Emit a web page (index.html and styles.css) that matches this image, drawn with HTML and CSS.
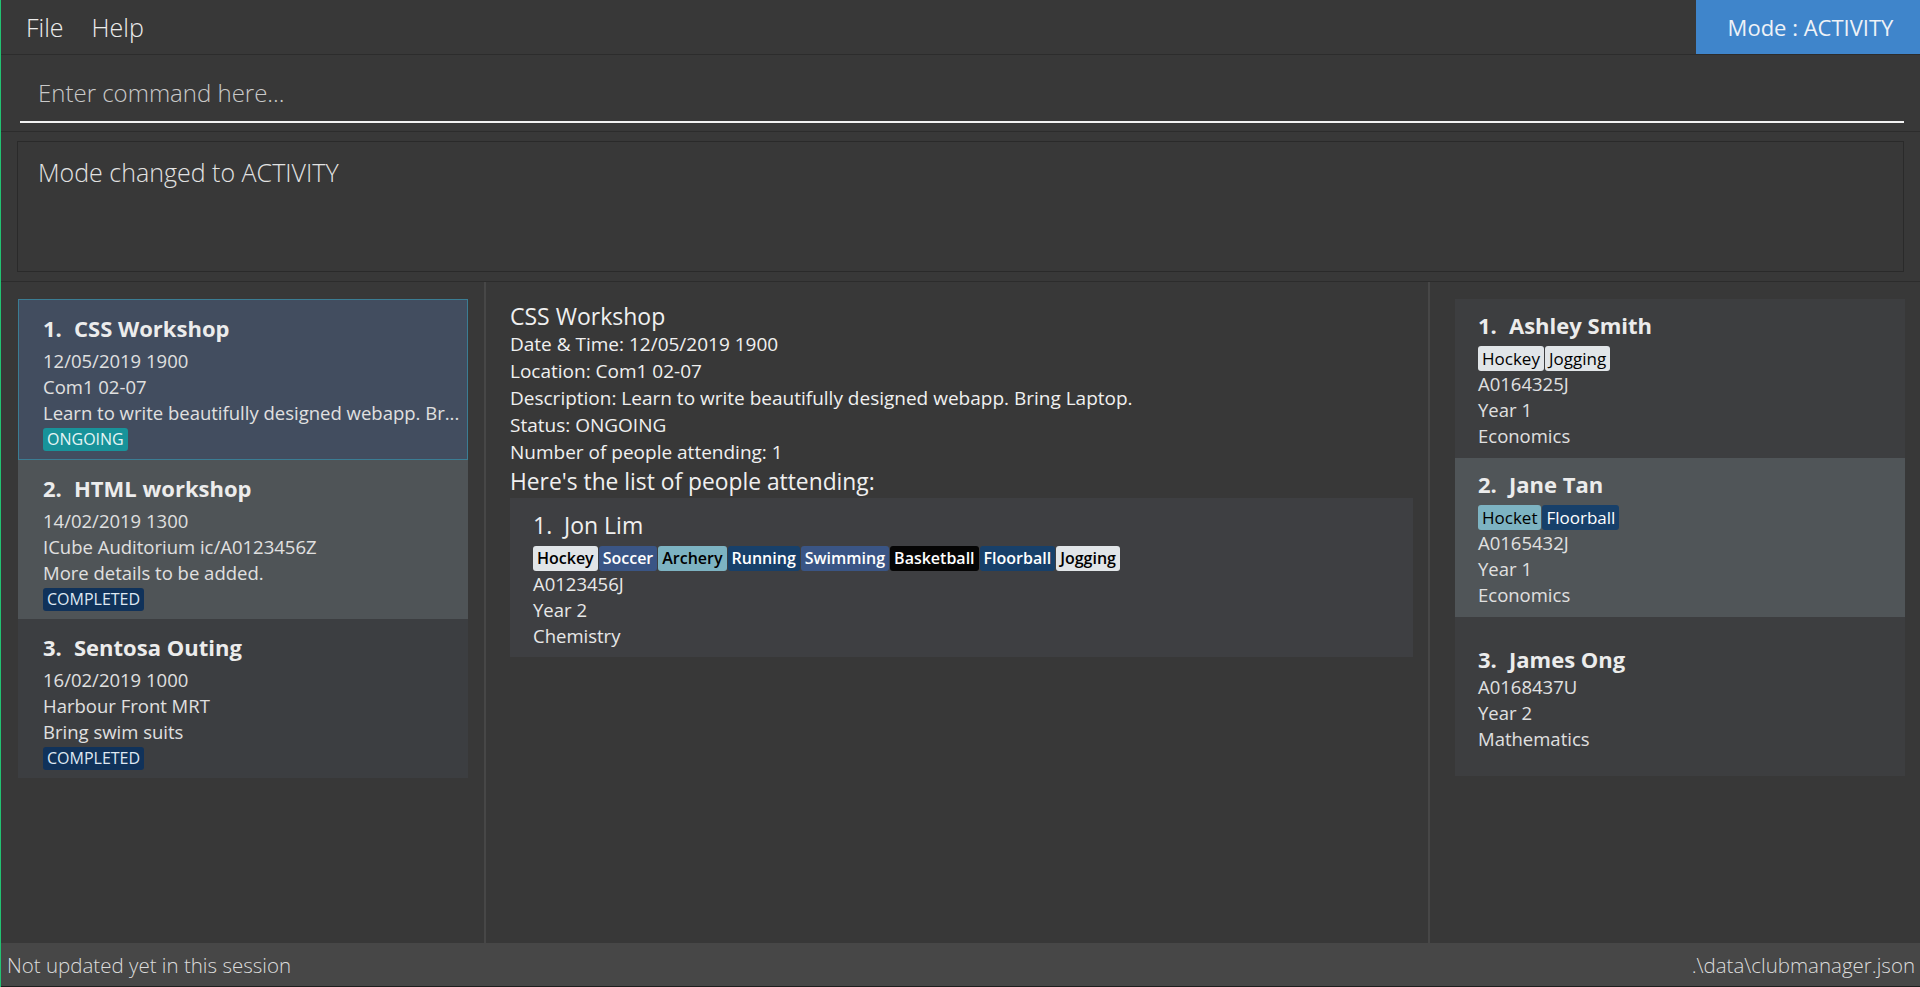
FILE: index.html
```html
<!DOCTYPE html>
<html>
<head>
<meta charset="utf-8">
<title>Club Manager</title>
<link rel="stylesheet" href="styles.css">
</head>
<body>
<div class="app">
  <header class="menubar">
    <nav class="menu">
      <span class="menu-item">File</span>
      <span class="menu-item">Help</span>
    </nav>
    <div class="mode">Mode : ACTIVITY</div>
  </header>

  <section class="command">
    <div class="command-field">Enter command here...</div>
  </section>

  <section class="result">
    <div class="result-box">Mode changed to ACTIVITY</div>
  </section>

  <main class="panels">
    <div class="col col-left">
      <div class="event-card selected">
        <div class="card-title"><span class="idx">1.</span>CSS Workshop</div>
        <div class="card-lines">
          <div class="card-line">12/05/2019 1900</div>
          <div class="card-line">Com1 02-07</div>
          <div class="card-line">Learn to write beautifully designed webapp. Br...</div>
        </div>
        <div class="badge-row"><span class="badge ongoing">ONGOING</span></div>
      </div>
      <div class="event-card hover">
        <div class="card-title"><span class="idx">2.</span>HTML workshop</div>
        <div class="card-lines">
          <div class="card-line">14/02/2019 1300</div>
          <div class="card-line">ICube Auditorium ic/A0123456Z</div>
          <div class="card-line">More details to be added.</div>
        </div>
        <div class="badge-row"><span class="badge completed">COMPLETED</span></div>
      </div>
      <div class="event-card">
        <div class="card-title"><span class="idx">3.</span>Sentosa Outing</div>
        <div class="card-lines">
          <div class="card-line">16/02/2019 1000</div>
          <div class="card-line">Harbour Front MRT</div>
          <div class="card-line">Bring swim suits</div>
        </div>
        <div class="badge-row"><span class="badge completed">COMPLETED</span></div>
      </div>
    </div>

    <div class="col col-mid">
      <div class="detail-title">CSS Workshop</div>
      <div class="detail-line">Date &amp; Time: 12/05/2019 1900</div>
      <div class="detail-line">Location: Com1 02-07</div>
      <div class="detail-line">Description: Learn to write beautifully designed webapp. Bring Laptop.</div>
      <div class="detail-line">Status: ONGOING</div>
      <div class="detail-line">Number of people attending: 1</div>
      <div class="detail-heading">Here's the list of people attending:</div>
      <div class="person-card">
        <div class="person-name"><span class="idx">1.</span>Jon Lim</div>
        <div class="tags tags-mid">
          <span class="tag t-light">Hockey</span><span class="tag t-blue">Soccer</span><span class="tag t-teal">Archery</span><span class="tag t-navy">Running</span><span class="tag t-blue">Swimming</span><span class="tag t-black">Basketball</span><span class="tag t-navy">Floorball</span><span class="tag t-light">Jogging</span>
        </div>
        <div class="person-line">A0123456J</div>
        <div class="person-line">Year 2</div>
        <div class="person-line">Chemistry</div>
      </div>
    </div>

    <div class="col col-right">
      <div class="member-card">
        <div class="card-title"><span class="idx">1.</span>Ashley Smith</div>
        <div class="tags"><span class="tag t-light">Hockey</span><span class="tag t-light">Jogging</span></div>
        <div class="member-lines">
          <div class="card-line">A0164325J</div>
          <div class="card-line">Year 1</div>
          <div class="card-line">Economics</div>
        </div>
      </div>
      <div class="member-card hover">
        <div class="card-title"><span class="idx">2.</span>Jane Tan</div>
        <div class="tags"><span class="tag t-teal">Hocket</span><span class="tag t-navy">Floorball</span></div>
        <div class="member-lines">
          <div class="card-line">A0165432J</div>
          <div class="card-line">Year 1</div>
          <div class="card-line">Economics</div>
        </div>
      </div>
      <div class="member-card">
        <div class="card-title"><span class="idx">3.</span>James Ong</div>
        <div class="member-lines">
          <div class="card-line">A0168437U</div>
          <div class="card-line">Year 2</div>
          <div class="card-line">Mathematics</div>
        </div>
      </div>
    </div>
  </main>

  <footer class="status">
    <span>Not updated yet in this session</span>
    <span>.\data\clubmanager.json</span>
  </footer>
</div>
</body>
</html>
```

FILE: styles.css
```css
* { box-sizing: border-box; margin: 0; padding: 0; }

html, body { width: 1920px; height: 987px; overflow: hidden; }

body {
  background: #383838;
  font-family: "Open Sans", "Noto Sans", "Liberation Sans", sans-serif;
  color: #e6e6e6;
}

.app {
  position: relative;
  display: flex;
  flex-direction: column;
  height: 987px;
}

.app::after {
  content: "";
  position: absolute;
  left: 0; top: 0; bottom: 0;
  width: 1px;
  background: #22c272;
}

/* menu bar */
.menubar {
  height: 55px;
  display: flex;
  justify-content: space-between;
  background: #383838;
  border-bottom: 1px solid #2c2c2c;
}
.menu { display: flex; padding-left: 12px; }
.menu-item {
  padding: 0 14px;
  font-size: 25px;
  font-weight: 300;
  line-height: 54px;
  color: #ececec;
}
.mode {
  width: 224px;
  height: 54px;
  background: #3f85cb;
  color: #eef2f7;
  font-size: 22px;
  line-height: 54px;
  text-align: center;
  padding-left: 5px;
}

/* command box */
.command {
  height: 77px;
  padding: 0 16px 0 20px;
  border-bottom: 1px solid #2c2c2c;
}
.command-field {
  height: 68px;
  padding: 20px 0 0 18px;
  line-height: 36px;
  font-size: 24px;
  font-weight: 300;
  color: #c9c9c9;
  border-bottom: 2px solid #f2f2f2;
}

/* result display */
.result {
  height: 150px;
  padding: 9px 16px 0 17px;
  border-bottom: 1px solid #2c2c2c;
}
.result-box {
  height: 131px;
  border: 1px solid #2a2a2a;
  padding: 14px 0 0 20px;
  font-size: 25px;
  font-weight: 300;
  line-height: 32px;
  color: #e2e2e2;
}

/* panels */
.panels {
  flex: 1;
  display: flex;
  min-height: 0;
}
.col { height: 100%; }
.col-left { width: 484px; padding: 17px 16px 0 18px; }
.col-mid {
  width: 946px;
  border-left: 2px solid #474747;
  border-right: 2px solid #474747;
  padding: 19px 15px 0 24px;
}
.col-right { width: 490px; padding: 17px 15px 0 25px; }

.idx { display: inline-block; width: 31px; }

.card-title {
  font-size: 22px;
  font-weight: 700;
  line-height: 30px;
  color: #ececec;
  white-space: nowrap;
}
.card-line {
  font-size: 18.5px;
  line-height: 26px;
  color: #e0e0e0;
  white-space: nowrap;
}

/* event cards */
.event-card {
  height: 159px;
  padding: 13px 12px 7px 25px;
  background: #3c3e41;
}
.event-card.selected {
  height: 161px;
  padding-left: 24px;
  background: #424d5f;
  border: 1px solid #3b7d94;
}
.event-card.hover { background: #4f5457; }
.card-lines { margin-top: 5px; }
.badge-row { display: flex; height: 23px; margin-top: 2px; }
.badge {
  height: 23px;
  line-height: 23px;
  padding: 0 4px;
  font-size: 16px;
  border-radius: 3px;
}
.badge.ongoing { background: #18939a; color: #e6f5f5; }
.badge.completed { background: #10325a; color: #dfe8f2; }

/* detail panel */
.detail-title {
  font-size: 23px;
  line-height: 30px;
  color: #f0f0f0;
}
.detail-line {
  font-size: 19px;
  line-height: 27px;
  color: #f0f0f0;
}
.detail-heading {
  font-size: 22.8px;
  line-height: 32px;
  color: #f0f0f0;
}
.person-card {
  height: 159px;
  padding: 12px 15px 6px 23px;
  background: #3e3f42;
}
.person-name {
  font-size: 23px;
  line-height: 30px;
  color: #f0f0f0;
}
.tags-mid { margin-top: 8px; }
.tags-mid .tag { font-size: 16px; font-weight: 600; }
.person-line {
  font-size: 18.5px;
  line-height: 26px;
  color: #e8e8e8;
}

/* tags */
.tags { display: flex; height: 25px; margin-top: 6px; }
.tag {
  height: 25px;
  line-height: 25px;
  padding: 0 4px;
  margin-right: 1px;
  font-size: 17px;
  border-radius: 3px;
}
.t-light { background: #e1e5e8; color: #000; }
.t-blue { background: #3a5585; color: #fff; }
.t-teal { background: #7db3c2; color: #000; }
.t-navy { background: #17406a; color: #fff; }
.t-black { background: #050505; color: #fff; }

/* member cards */
.member-card {
  height: 159px;
  padding: 11px 15px 9px 23px;
  background: #3d3e40;
  display: flex;
  flex-direction: column;
  justify-content: center;
}
.member-card.hover { background: #505558; }
.member-lines { margin-top: 0; }

/* status bar */
.status {
  height: 44px;
  display: flex;
  justify-content: space-between;
  padding: 0 5px 0 7px;
  background: #474747;
  font-size: 20.5px;
  font-weight: 300;
  line-height: 44px;
  color: #dcdcdc;
  border-bottom: 1px solid #1e1e1e;
}
```
